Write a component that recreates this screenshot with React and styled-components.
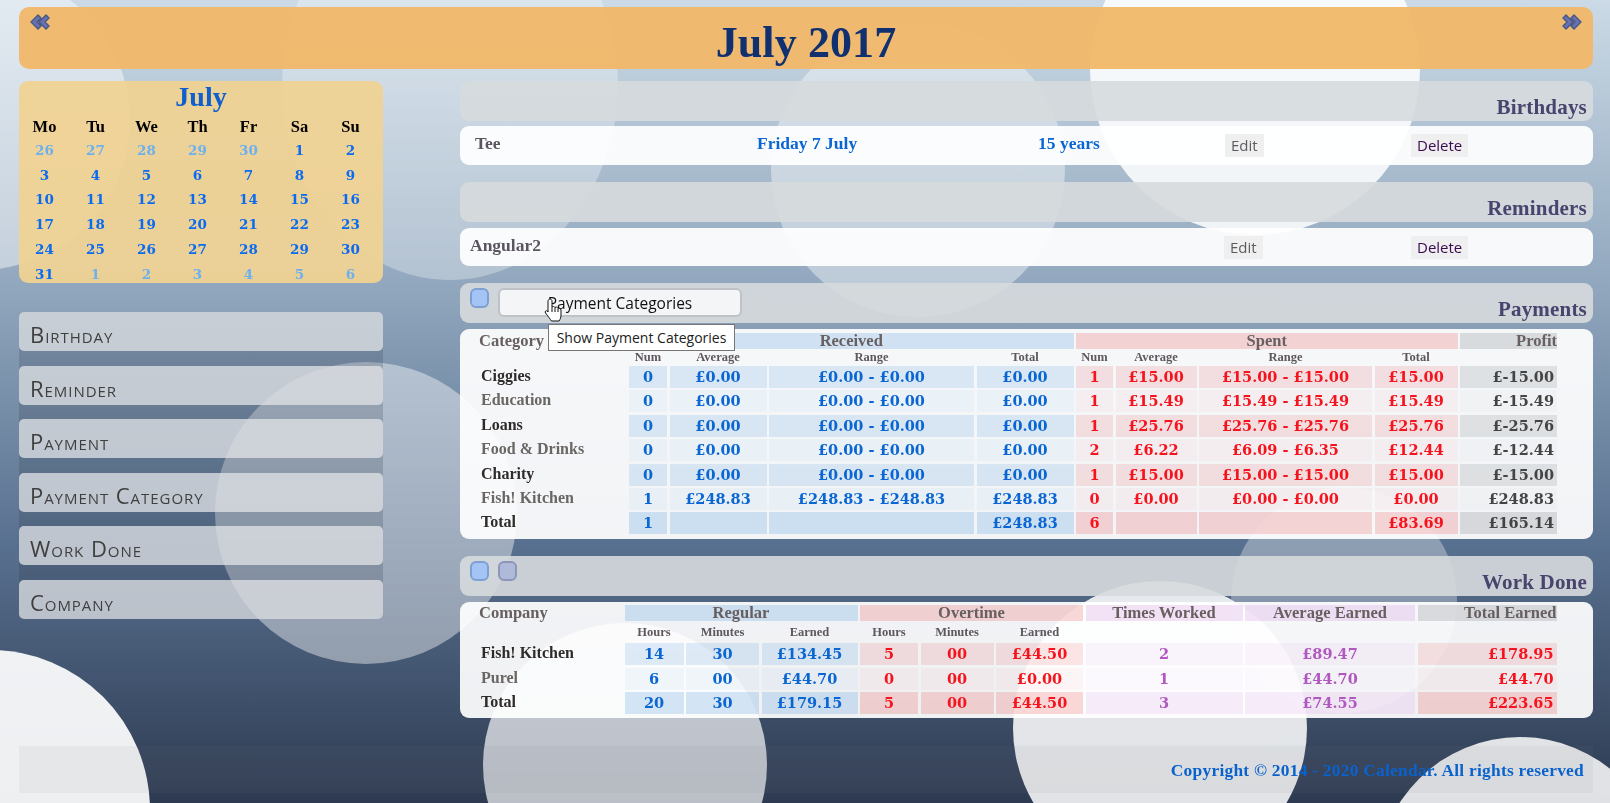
import styled, { createGlobalStyle } from 'styled-components';

const serif = `"Liberation Serif", "DejaVu Serif", serif`;
const numeric = `"DejaVu Serif", "Liberation Serif", serif`;
const sans = `"Open Sans", "Noto Sans", sans-serif`;

const GlobalStyle = createGlobalStyle`
  html, body {
    margin: 0;
    padding: 0;
    height: 803px;
    overflow: hidden;
    background: #2f3c53;
  }
  body {
    font-family: ${serif};
  }
`;

// Background
const Backdrop = styled.svg`
  position: fixed;
  top: 0;
  left: 0;
  width: 1610px;
  height: 803px;
  z-index: 0;
`;

const circles = [
  { x: -20, y: 120, rx: 150, ry: 150, a: 0.45 },
  { x: 450, y: 85, rx: 168, ry: 195, a: 0.3 },
  { x: 918, y: 170, rx: 147, ry: 147, a: 0.4 },
  { x: 1255, y: 70, rx: 165, ry: 165, a: 0.85 },
  { x: 366, y: 513, rx: 151, ry: 151, a: 0.42 },
  { x: -10, y: 810, rx: 160, ry: 160, a: 0.92 },
  { x: 625, y: 765, rx: 142, ry: 142, a: 0.68 },
  { x: 1160, y: 728, rx: 147, ry: 147, a: 0.86 },
  { x: 1344, y: 600, rx: 113, ry: 113, a: 0.32 },
  { x: 1520, y: 880, rx: 143, ry: 143, a: 0.85 },
];

const Page = styled.div`
  position: relative;
  z-index: 1;
  width: 1610px;
  height: 803px;
  box-sizing: border-box;
  padding: 7px 17px 0 19px;
`;

const MonthBar = styled.header`
  position: relative;
  height: 62px;
  border-radius: 10px;
  background: rgba(240, 184, 106, 0.96);
  display: flex;
  align-items: center;
  justify-content: center;
  margin-bottom: 12px;
`;

const MonthTitle = styled.h1`
  margin: 0;
  padding-top: 10px;
  font-size: 44px;
  line-height: 60px;
  font-weight: 700;
  color: #10306f;
  letter-spacing: 0.1px;
`;

const Arrow = styled.svg`
  position: absolute;
  top: 7px;
  width: 20px;
  height: 16px;
  ${p => (p.$flip ? 'right: 11px; transform: scaleX(-1);' : 'left: 11px;')}
`;

const Columns = styled.div`
  display: grid;
  grid-template-columns: 364px 1133px;
  column-gap: 77px;
`;

const Sidebar = styled.aside`
  display: flex;
  flex-direction: column;
  gap: 29px;
`;

// Calendar
const Calendar = styled.div`
  height: 202px;
  border-radius: 9px;
  background: rgba(240, 210, 148, 0.94);
  text-align: center;
`;

const CalendarTitle = styled.div`
  font-size: 28px;
  line-height: 32px;
  font-weight: 700;
  color: #0f5fcd;
`;

const CalendarGrid = styled.div`
  display: grid;
  grid-template-columns: repeat(7, 51px);
  grid-auto-rows: 24.8px;
  margin-top: 1px;
`;

const DayName = styled.div`
  font-size: 16.5px;
  line-height: 26px;
  font-weight: 700;
  color: #000;
`;

const DayNumber = styled.div`
  font-family: ${numeric};
  font-size: 13.5px;
  line-height: 23px;
  font-weight: 700;
  color: ${p => (p.$muted ? '#6cb1ee' : '#0a6bf0')};
`;

// Side menu
const Menu = styled.nav`
  display: flex;
  flex-direction: column;
  gap: 14.6px;
  border-radius: 5px;
  background: rgba(40, 50, 65, 0.2);
`;

const MenuItem = styled.a`
  display: block;
  height: 39px;
  box-sizing: border-box;
  padding: 7px 0 0 11px;
  border-radius: 5px;
  background: rgba(226, 228, 230, 0.76);
  font-family: ${sans};
  font-variant: small-caps;
  font-size: 22px;
  font-weight: 500;
  line-height: 30px;
  letter-spacing: 0.95px;
  color: #3f3f3f;
`;

// Main column
const Main = styled.main`
  display: flex;
  flex-direction: column;
`;

const SectionBar = styled.div`
  position: relative;
  height: 40px;
  box-sizing: border-box;
  border-radius: 9px;
  background: rgba(214, 218, 221, 0.9);
  display: flex;
  align-items: flex-start;
  gap: 9px;
  padding: 5px 6px 0 10px;
  margin-top: ${p => p.$top || 0}px;
  margin-bottom: ${p => p.$bottom || 6}px;
`;

const SectionTitle = styled.h2`
  margin: 11px 0 0 auto;
  font-size: 21px;
  line-height: 20px;
  font-weight: 700;
  color: #48446e;
  letter-spacing: 0.2px;
`;

const Toggle = styled.button`
  width: 19px;
  height: 20px;
  padding: 0;
  border-radius: 6px;
  border: 2px solid ${p => (p.$purple ? '#8c96b8' : '#7d9fd2')};
  background: ${p => (p.$purple ? '#afb9da' : '#a3c4f5')};
`;

const CategoriesButton = styled.button`
  width: 244px;
  height: 29px;
  padding: 0;
  border-radius: 6px;
  border: 2px solid #bfc2c6;
  background: #f4f5f7;
  font-family: ${sans};
  font-size: 15.5px;
  color: #111;
`;

const Tooltip = styled.div`
  position: absolute;
  z-index: 3;
  left: 88px;
  top: 41px;
  width: 187px;
  height: 27px;
  box-sizing: border-box;
  border: 1px solid #767676;
  background: #fff;
  font-family: ${sans};
  font-size: 14px;
  line-height: 25px;
  text-align: center;
  color: #222;
`;

const HandCursor = styled.svg`
  position: absolute;
  z-index: 4;
  left: 84px;
  top: 15px;
  width: 18px;
  height: 24px;
`;

const Card = styled.div`
  border-radius: 9px;
  background: rgba(255, 255, 255, 0.92);
`;

const EntryRow = styled(Card)`
  height: ${p => p.$height}px;
  box-sizing: border-box;
  padding: 8px 0 0 ${p => p.$inset}px;
  display: grid;
  grid-template-columns: ${p => p.$columns};
  align-items: start;
`;

const EntryName = styled.div`
  font-size: 17.5px;
  line-height: 18px;
  font-weight: 700;
  color: #5b5560;
`;

const EntryValue = styled.div`
  font-size: 17.5px;
  line-height: 18px;
  font-weight: 700;
  color: #0a66d2;
`;

const RowAction = styled.button`
  justify-self: start;
  height: 23px;
  padding: 0 6px;
  border: 0;
  background: #efefef;
  font-family: ${sans};
  font-size: 15px;
  line-height: 23px;
  color: ${p => (p.$danger ? '#3a0a50' : '#5d5a60')};
`;

// Summary tables
const TableCard = styled(Card)`
  padding: ${p => p.$top}px 0 ${p => p.$bottom}px 5px;
`;

const SummaryGrid = styled.div`
  display: grid;
  grid-template-columns: ${p => p.$columns};
  grid-template-rows: ${p => p.$rows};
  column-gap: 2.5px;
  row-gap: 2.4px;
`;

const tones = {
  blue: { rgb: '105, 165, 225', head: 0.27, odd: 0.2, even: 0.07, total: 0.27 },
  red: { rgb: '235, 110, 110', head: 0.27, odd: 0.18, even: 0.06, total: 0.27 },
  purple: { rgb: '215, 150, 225', head: 0.27, odd: 0.1, even: 0.04, total: 0.17 },
  gray: { rgb: '120, 125, 130', head: 0.23, odd: 0.18, even: 0.03, total: 0.23 },
};

const toneFill = (tone, level) => `rgba(${tones[tone].rgb}, ${tones[tone][level]})`;

const GroupHead = styled.div`
  grid-column: span ${p => p.$span || 1};
  font-size: 16.5px;
  line-height: 16px;
  font-weight: 700;
  color: #686060;
  text-align: ${p => p.$align || 'center'};
  background: ${p => (p.$tone ? toneFill(p.$tone, 'head') : 'transparent')};
`;

const CornerHead = styled(GroupHead)`
  padding-left: 14px;
  text-align: left;
`;

const SubHead = styled.div`
  font-size: 12.5px;
  line-height: 12px;
  font-weight: 700;
  color: #5f575e;
  text-align: center;
  align-self: center;
`;

const RowLabel = styled.div`
  padding-left: 16px;
  font-size: 16px;
  line-height: 20px;
  font-weight: 700;
  color: ${p => (p.$level === 'even' ? '#6a6664' : '#2f2b2b')};
`;

const textColors = { blue: '#0a66d2', red: '#f5141e', purple: '#b058c0', gray: '#444' };

const ValueCell = styled.div`
  font-family: ${numeric};
  font-size: 14.5px;
  line-height: 22px;
  font-weight: 700;
  color: ${p => textColors[p.$text || p.$tone]};
  text-align: ${p => p.$align || 'center'};
  padding-right: ${p => (p.$align === 'right' ? 3 : 0)}px;
  background: ${p => toneFill(p.$tone, p.$level)};
`;

// Footer
const Footer = styled.footer`
  margin-top: 28px;
  height: 47px;
  box-sizing: border-box;
  padding: 14px 9px 0 0;
  background: rgba(128, 128, 128, 0.08);
  text-align: right;
  font-size: 17.4px;
  line-height: 20px;
  font-weight: 700;
  letter-spacing: 0.25px;
  color: #0a62cc;
`;

const weekDays = ['Mo', 'Tu', 'We', 'Th', 'Fr', 'Sa', 'Su'];

const calendarDays = [
  [26, 1], [27, 1], [28, 1], [29, 1], [30, 1], [1], [2],
  [3], [4], [5], [6], [7], [8], [9],
  [10], [11], [12], [13], [14], [15], [16],
  [17], [18], [19], [20], [21], [22], [23],
  [24], [25], [26], [27], [28], [29], [30],
  [31], [1, 1], [2, 1], [3, 1], [4, 1], [5, 1], [6, 1],
];

const menuItems = ['Birthday', 'Reminder', 'Payment', 'Payment Category', 'Work Done', 'Company'];

const paymentSubHeads = ['Num', 'Average', 'Range', 'Total', 'Num', 'Average', 'Range', 'Total', ''];

const paymentRows = [
  ['Ciggies', '0', '£0.00', '£0.00 - £0.00', '£0.00', '1', '£15.00', '£15.00 - £15.00', '£15.00', '£-15.00'],
  ['Education', '0', '£0.00', '£0.00 - £0.00', '£0.00', '1', '£15.49', '£15.49 - £15.49', '£15.49', '£-15.49'],
  ['Loans', '0', '£0.00', '£0.00 - £0.00', '£0.00', '1', '£25.76', '£25.76 - £25.76', '£25.76', '£-25.76'],
  ['Food & Drinks', '0', '£0.00', '£0.00 - £0.00', '£0.00', '2', '£6.22', '£6.09 - £6.35', '£12.44', '£-12.44'],
  ['Charity', '0', '£0.00', '£0.00 - £0.00', '£0.00', '1', '£15.00', '£15.00 - £15.00', '£15.00', '£-15.00'],
  ['Fish! Kitchen', '1', '£248.83', '£248.83 - £248.83', '£248.83', '0', '£0.00', '£0.00 - £0.00', '£0.00', '£248.83'],
  ['Total', '1', '', '', '£248.83', '6', '', '', '£83.69', '£165.14'],
];

const paymentTones = ['blue', 'blue', 'blue', 'blue', 'red', 'red', 'red', 'red', 'gray'];

const workSubHeads = ['Hours', 'Minutes', 'Earned', 'Hours', 'Minutes', 'Earned', '', '', ''];

const workRows = [
  ['Fish! Kitchen', '14', '30', '£134.45', '5', '00', '£44.50', '2', '£89.47', '£178.95'],
  ['Purel', '6', '00', '£44.70', '0', '00', '£0.00', '1', '£44.70', '£44.70'],
  ['Total', '20', '30', '£179.15', '5', '00', '£44.50', '3', '£74.55', '£223.65'],
];

const workTones = ['blue', 'blue', 'blue', 'red', 'red', 'red', 'purple', 'purple', 'red'];

const rowLevel = (index, count) => {
  if (index === count - 1) return 'total';
  return index % 2 === 0 ? 'odd' : 'even';
};

const ArrowIcon = ({ flip }) => (
  <Arrow $flip={flip} viewBox="0 0 20 16">
    <path
      d="M8 1 L1 8 L8 15 L11 12 L7 8 L11 4 Z M16 1 L9 8 L16 15 L19 12 L15 8 L19 4 Z"
      fill="#6a70b8"
      stroke="#46587e"
      strokeWidth="1.4"
      strokeLinejoin="round"
    />
  </Arrow>
);

const DataRows = ({ rows, cellTones, lastText }) =>
  rows.map((row, index) => {
    const level = rowLevel(index, rows.length);
    const [label, ...values] = row;
    return [
      <RowLabel key={label} $level={level}>{label}</RowLabel>,
      ...values.map((value, col) => {
        const isLast = col === values.length - 1;
        return (
          <ValueCell
            key={`${label}-${col}`}
            $tone={cellTones[col]}
            $text={isLast ? lastText : undefined}
            $level={level}
            $align={isLast ? 'right' : 'center'}
          >
            {value}
          </ValueCell>
        );
      }),
    ];
  });

const App = () => (
  <>
    <GlobalStyle />
    <Backdrop viewBox="0 0 1610 803">
      <defs>
        <linearGradient id="sky" x1="0" y1="0" x2="0" y2="1">
          <stop offset="0" stopColor="#cbdae6" />
          <stop offset="0.37" stopColor="#8fa5bc" />
          <stop offset="0.68" stopColor="#58708f" />
          <stop offset="1" stopColor="#2d3a51" />
        </linearGradient>
      </defs>
      <rect width="1610" height="803" fill="url(#sky)" />
      {circles.map(c => (
        <ellipse key={`${c.x}-${c.y}`} cx={c.x} cy={c.y} rx={c.rx} ry={c.ry} fill="#fff" fillOpacity={c.a} />
      ))}
    </Backdrop>

    <Page>
      <MonthBar>
        <ArrowIcon />
        <MonthTitle>July 2017</MonthTitle>
        <ArrowIcon flip />
      </MonthBar>

      <Columns>
        <Sidebar>
          <Calendar>
            <CalendarTitle>July</CalendarTitle>
            <CalendarGrid>
              {weekDays.map(day => (
                <DayName key={day}>{day}</DayName>
              ))}
              {calendarDays.map(([day, muted], index) => (
                <DayNumber key={index} $muted={!!muted}>{day}</DayNumber>
              ))}
            </CalendarGrid>
          </Calendar>

          <Menu>
            {menuItems.map(item => (
              <MenuItem key={item}>{item}</MenuItem>
            ))}
          </Menu>
        </Sidebar>

        <Main>
          <SectionBar $bottom={5}>
            <SectionTitle>Birthdays</SectionTitle>
          </SectionBar>
          <EntryRow $height={39} $inset={15} $columns="282px 281px 187px 186px 1fr">
            <EntryName>Tee</EntryName>
            <EntryValue>Friday 7 July</EntryValue>
            <EntryValue>15 years</EntryValue>
            <RowAction>Edit</RowAction>
            <RowAction $danger>Delete</RowAction>
          </EntryRow>

          <SectionBar $top={17}>
            <SectionTitle>Reminders</SectionTitle>
          </SectionBar>
          <EntryRow $height={38} $inset={10} $columns="754px 187px 1fr">
            <EntryName>Angular2</EntryName>
            <RowAction>Edit</RowAction>
            <RowAction $danger>Delete</RowAction>
          </EntryRow>

          <SectionBar $top={17}>
            <Toggle />
            <CategoriesButton>Payment Categories</CategoriesButton>
            <SectionTitle>Payments</SectionTitle>
            <Tooltip>Show Payment Categories</Tooltip>
            <HandCursor viewBox="0 0 18 24">
              <path
                d="M6 1 C7 1 8 2 8 3 V9 C8.5 8.3 10.5 8.3 11 9.5 C11.7 8.8 13.4 9 14 10.3 C15 9.8 17 10.5 17 12 V17 C17 20 16 21.5 15 23 H7.5 C6 21 4 18 1.5 15 C0.5 13.5 2 12 3.5 13 L4 14 V3 C4 2 5 1 6 1 Z M8 9 V14 M11 9.5 V14 M14 10.3 V14"
                fill="#fff"
                stroke="#111"
                strokeWidth="1"
              />
            </HandCursor>
          </SectionBar>
          <TableCard $top={4} $bottom={5}>
            <SummaryGrid
              $columns="161.5px 38px 97px 205px 97px 37px 81px 173px 83px 97px"
              $rows="16px 12.2px repeat(7, 22px)"
            >
              <CornerHead>Category</CornerHead>
              <GroupHead $span={4} $tone="blue">Received</GroupHead>
              <GroupHead $span={4} $tone="red">Spent</GroupHead>
              <GroupHead $tone="gray" $align="right">Profit</GroupHead>
              <div />
              {paymentSubHeads.map((head, index) => (
                <SubHead key={index}>{head}</SubHead>
              ))}
              <DataRows rows={paymentRows} cellTones={paymentTones} lastText="gray" />
            </SummaryGrid>
          </TableCard>

          <SectionBar $top={17}>
            <Toggle />
            <Toggle $purple />
            <SectionTitle>Work Done</SectionTitle>
          </SectionBar>
          <TableCard $top={3} $bottom={4}>
            <SummaryGrid
              $columns="157px 59px 73px 96px 58px 73px 87px 157px 170px 139px"
              $rows="16px 17.2px repeat(3, 22px)"
            >
              <CornerHead>Company</CornerHead>
              <GroupHead $span={3} $tone="blue">Regular</GroupHead>
              <GroupHead $span={3} $tone="red">Overtime</GroupHead>
              <GroupHead $tone="purple">Times Worked</GroupHead>
              <GroupHead $tone="purple">Average Earned</GroupHead>
              <GroupHead $tone="gray" $align="right">Total Earned</GroupHead>
              <div />
              {workSubHeads.map((head, index) => (
                <SubHead key={index}>{head}</SubHead>
              ))}
              <DataRows rows={workRows} cellTones={workTones} />
            </SummaryGrid>
          </TableCard>
        </Main>
      </Columns>

      <Footer>Copyright © 2014 - 2020 Calendar. All rights reserved</Footer>
    </Page>
  </>
);

export default App;
